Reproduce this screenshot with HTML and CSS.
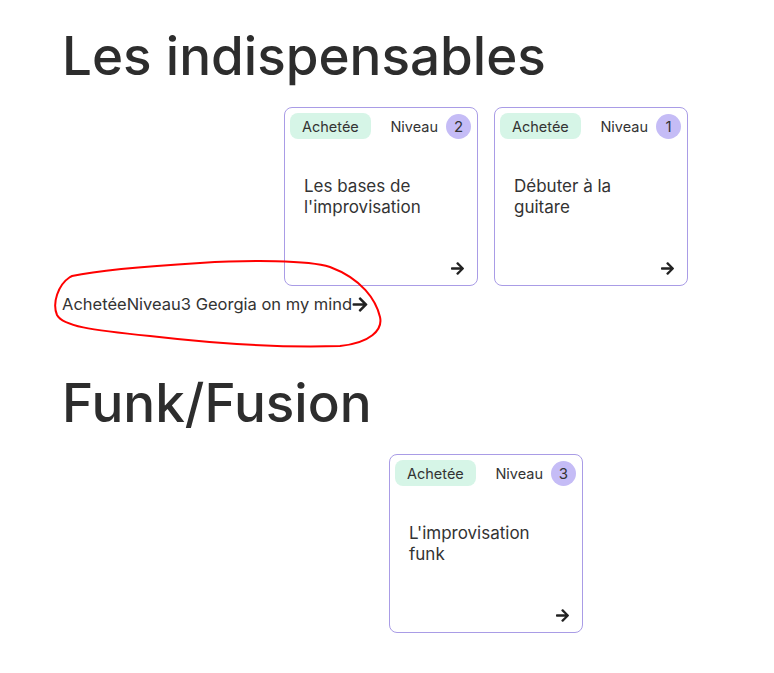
FILE: index.html
```html
<!DOCTYPE html>
<html lang="fr">
<head>
  <meta charset="UTF-8" />
  <meta name="viewport" content="width=device-width, initial-scale=1.0"/>
  <title>Formations</title>
  <link rel="stylesheet" href="styles.css">
</head>
<body>
  <svg class="sprites" xmlns="http://www.w3.org/2000/svg">
    <symbol id="arrow" viewBox="0 0 448 512">
      <path d="M190.5 66.9l22.2-22.2c9.4-9.4 24.6-9.4 33.9 0L441 239c9.4 9.4 9.4 24.6 0 33.9L246.6 467.3c-9.4 9.4-24.6 9.4-33.9 0l-22.2-22.2c-9.5-9.5-9.3-25 .4-34.3L311.4 296H24c-13.3 0-24-10.7-24-24v-32c0-13.3 10.7-24 24-24h287.4L190.9 101.2c-9.8-9.3-10-24.8-.4-34.3z"/>
    </symbol>
  </svg>

  <main class="page">
    <section class="group">
      <h1 class="group-title">Les indispensables</h1>
      <div class="cards">
        <a href="#" class="card">
          <div class="card-head">
            <span class="badge">Achetée</span>
            <span class="level">Niveau <span class="level-num">2</span></span>
          </div>
          <p class="card-title">Les bases de l'improvisation</p>
          <svg class="card-arrow"><use href="#arrow"/></svg>
        </a>
        <a href="#" class="card">
          <div class="card-head">
            <span class="badge">Achetée</span>
            <span class="level">Niveau <span class="level-num">1</span></span>
          </div>
          <p class="card-title">Débuter à la guitare</p>
          <svg class="card-arrow"><use href="#arrow"/></svg>
        </a>
      </div>
      <a href="#" class="broken">AchetéeNiveau3 Georgia on my mind<svg class="broken-arrow"><use href="#arrow"/></svg>
        <svg class="scribble" viewBox="0 0 340 100" xmlns="http://www.w3.org/2000/svg">
          <path d="M20 22 C 8 30, 2 48, 7 60 C 13 71, 40 75, 100 81 C 160 88, 230 93, 290 91 C 320 88, 333 75, 330 62 C 326 45, 312 24, 280 12 C 258 5, 200 5, 150 8 C 100 11, 50 15, 22 21 Z" />
        </svg>
      </a>
    </section>

    <section class="group">
      <h1 class="group-title">Funk/Fusion</h1>
      <div class="cards">
        <a href="#" class="card">
          <div class="card-head">
            <span class="badge">Achetée</span>
            <span class="level">Niveau <span class="level-num">3</span></span>
          </div>
          <p class="card-title">L'improvisation funk</p>
          <svg class="card-arrow"><use href="#arrow"/></svg>
        </a>
      </div>
    </section>
  </main>
</body>
</html>
```

FILE: styles.css
```css
body {
  margin: 0;
  font-family: Inter, 'Noto Sans', sans-serif;
  color: #2d2d2d;
  background: #fff;
}

.sprites {
  display: none;
}

.page {
  padding: 19px 62px;
}

.group + .group {
  margin-top: 52px;
}

.group-title {
  margin: 0 0 13px;
  font-size: 53px;
  font-weight: 500;
  line-height: 75px;
  color: #2d2d2d;
}

.cards {
  display: flex;
  justify-content: center;
  gap: 16px;
  margin-left: 198px;
}

.card {
  box-sizing: border-box;
  width: 194px;
  height: 179px;
  padding: 5px 6px 5px 5px;
  border: 1px solid #a99ce6;
  border-radius: 8px;
  display: flex;
  flex-direction: column;
  text-decoration: none;
  color: #333;
}

.card-head {
  display: flex;
  justify-content: space-between;
  align-items: center;
}

.badge {
  height: 26px;
  line-height: 27px;
  padding: 0 12px;
  border-radius: 8px;
  background: #d6f5e7;
  font-size: 14.5px;
  color: #333;
}

.level {
  display: flex;
  align-items: center;
  gap: 8px;
  font-size: 14.5px;
  color: #333;
}

.level-num {
  width: 25px;
  height: 25px;
  line-height: 25px;
  border-radius: 50%;
  background: #c5bcf6;
  font-size: 15px;
  text-align: center;
}

.card-title {
  margin: 37px 0 0 14px;
  padding-right: 20px;
  font-size: 17px;
  line-height: 21px;
  color: #333;
}

.card-arrow {
  width: 13px;
  height: 15px;
  margin-top: auto;
  margin-right: 7px;
  margin-bottom: 4px;
  align-self: flex-end;
  fill: #222;
}

.broken {
  position: relative;
  display: inline-block;
  margin-top: 9px;
  font-size: 16.5px;
  line-height: 19px;
  color: #333;
  text-decoration: none;
}

.broken-arrow {
  width: 16px;
  height: 17px;
  vertical-align: -3px;
  fill: #222;
}

.scribble {
  position: absolute;
  left: -12px;
  top: -40px;
  width: 340px;
  height: 100px;
  fill: none;
  stroke: #f00;
  stroke-width: 2;
  overflow: visible;
}
```
